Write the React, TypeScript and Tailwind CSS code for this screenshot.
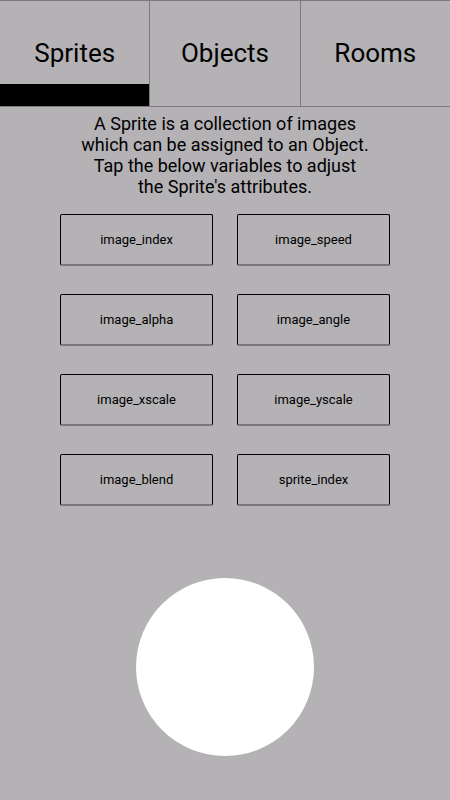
const TABS = ['Sprites', 'Objects', 'Rooms'];

const VARIABLES = [
  'image_index',
  'image_speed',
  'image_alpha',
  'image_angle',
  'image_xscale',
  'image_yscale',
  'image_blend',
  'sprite_index',
];

export default function App() {
  return (
    <div
      className="w-[450px] h-[800px] bg-[#b4b2b5] flex flex-col overflow-hidden text-black"
      style={{ fontFamily: 'Roboto, "Liberation Sans", sans-serif' }}
    >
      <div className="flex h-[107px] border-t border-b border-[#7c7a7d]">
        {TABS.map((tab, i) => (
          <div
            key={tab}
            className={`flex-1 flex flex-col ${i < TABS.length - 1 ? 'border-r border-[#7c7a7d]' : ''}`}
          >
            <div className="flex-1 flex items-center justify-center pt-[21px] text-[26px]">
              {tab}
            </div>
            <div className={`h-[22px] ${i === 0 ? 'bg-black' : ''}`} />
          </div>
        ))}
      </div>

      <p className="mt-[6px] text-center text-[18px] leading-[21px]">
        A Sprite is a collection of images
        <br />
        which can be assigned to an Object.
        <br />
        Tap the below variables to adjust
        <br />
        the Sprite's attributes.
      </p>

      <div className="mt-[17px] mx-auto grid grid-cols-[153px_153px] gap-x-[24px] gap-y-[28px]">
        {VARIABLES.map((v) => (
          <button
            key={v}
            className="h-[52px] flex items-center justify-center rounded-[2px] border border-black border-b-2 border-b-[#7a787b] text-[13px]"
          >
            {v}
          </button>
        ))}
      </div>

      <div className="mt-[72px] mx-auto w-[178px] h-[178px] rounded-full bg-white" />
    </div>
  );
}
